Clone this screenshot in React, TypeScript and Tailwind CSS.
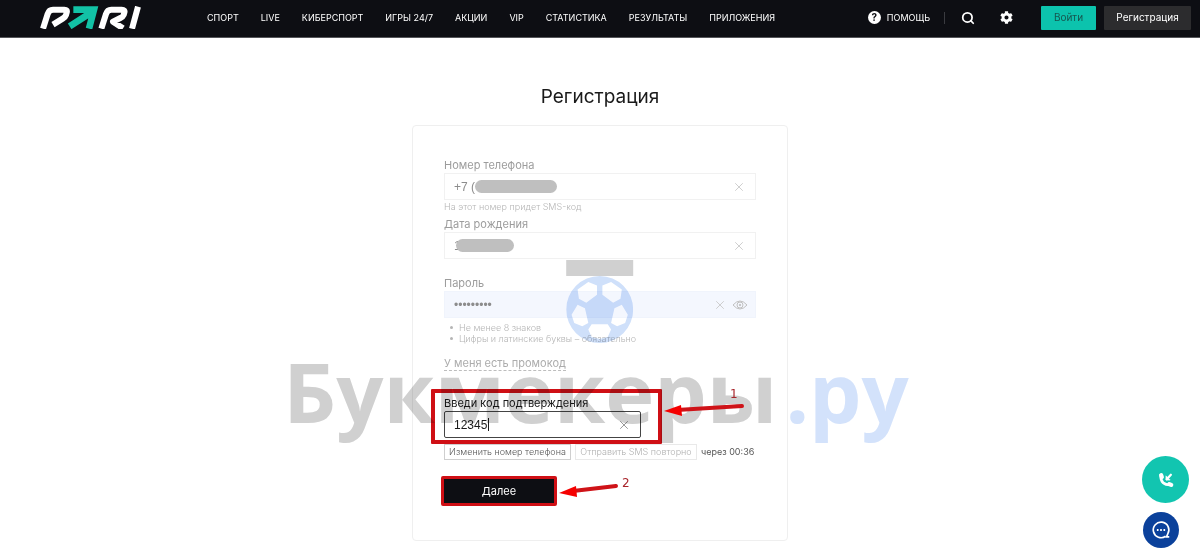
import React, { useState } from 'react';
import { Search, X } from 'lucide-react';
import { FaCog } from 'react-icons/fa';

const NAV = ['Спорт', 'Live', 'Киберспорт', 'Игры 24/7', 'Акции', 'VIP', 'Статистика', 'Результаты', 'Приложения'];

const Logo = () => (
    <svg viewBox="0 0 309 69" className="h-[23px] w-[103px]" aria-label="PARI" role="img">
        <g fill="none" strokeWidth="18" strokeLinejoin="round">
            <path stroke="#fff" d="M12 68 L26 24 Q30 11 42 11 H76 Q86 11 83 20 L81 27 Q79 33 71 38 L42 56" />
            <path stroke="#12c2a6" d="M103 11 H165 L150 68 M92 61 L156 20" strokeLinejoin="miter" strokeWidth="20" />
            <path stroke="#fff" d="M187 68 L201 24 Q205 11 217 11 H248 Q259 11 256 20 L254 27 Q252 32 244 36 L222 47 L252 67 M279 68 L297 2" />
        </g>
    </svg>
);

const Header = () => (
    <header className="flex h-[38px] items-center border-b border-[#55565a] bg-[#0d0e13] pb-[2px] pl-[39px] pr-[9px] text-white">
        <a href="#" className="shrink-0"><Logo /></a>
        <nav className="ml-[65px] flex gap-[22px] whitespace-nowrap text-[9px] uppercase">
            {NAV.map((item) => <a key={item} href="#">{item}</a>)}
        </nav>
        <div className="ml-auto flex items-center">
            <a href="#" className="flex items-center gap-[6px] text-[9px] uppercase">
                <span className="flex size-[13px] items-center justify-center rounded-full bg-white text-[10px] font-bold text-[#0d0e13]">?</span>
                Помощь
            </a>
            <span className="ml-[14px] mr-4 h-3 w-px bg-[#3a3b40]" />
            <button aria-label="Поиск"><Search size={14} strokeWidth={3} /></button>
            <button aria-label="Настройки" className="ml-[25px] mr-7"><FaCog size={13} /></button>
            <button className="h-6 w-[55px] rounded-[1px] bg-[#0cc3ad] text-[10px] text-[#16564f]">Войти</button>
            <button className="ml-2 h-6 w-[87px] rounded-[1px] bg-[#2c2c2e] text-[10px]">Регистрация</button>
        </div>
    </header>
);

interface FieldProps {
    id: string;
    label: string;
    value: string;
    type?: string;
    mask?: string;
    filled?: boolean;
}

const Field: React.FC<FieldProps> = ({ id, label, value, type = 'text', mask, filled }) => {
    const [text, setText] = useState(value);
    return (
        <div>
            <label htmlFor={id} className="block h-4 text-[11px] leading-4 text-[#9c9c9c]">{label}</label>
            <div className={`relative flex h-[27px] items-center border pr-[9px] ${filled ? 'border-[#f0f4fc] bg-[#f4f7fe]' : 'border-[#f1f1f1]'}`}>
                <input
                    id={id}
                    type={type}
                    value={text}
                    onChange={(e) => setText(e.target.value)}
                    className="min-w-0 flex-1 pl-[9px] font-['Liberation_Sans',sans-serif] text-[12px] text-[#8c8c8c] outline-none"
                />
                {mask && <span className={`absolute top-[6px] h-[13px] rounded-full bg-[#bfbfbf] ${mask}`} />}
                <button type="button" aria-label="Очистить" onClick={() => setText('')}>
                    <X size={14} strokeWidth={1.5} className="text-[#c8c8c8]" />
                </button>
                {filled && (
                    <button type="button" aria-label="Показать пароль" className="-mr-[2px] ml-[5px]">
                        <svg viewBox="0 0 32 20" className="h-[10px] w-4 text-[#c0c0c0]" fill="none" stroke="currentColor" strokeWidth="2">
                            <path d="M2 10 Q16 -6 30 10 Q16 26 2 10 Z" />
                            <circle cx="16" cy="10" r="6" />
                            <circle cx="16" cy="10" r="1.500" fill="currentColor" />
                        </svg>
                    </button>
                )}
            </div>
        </div>
    );
};

/* Полупрозрачный знак поверх страницы */
const Watermark = () => (
    <div className="pointer-events-none absolute left-1/2 top-[134px] flex -translate-x-1/2 flex-col items-center mix-blend-multiply" aria-hidden="true">
        <div className="h-4 w-[67px] bg-[#d0d0d0]" />
        <svg viewBox="0 0 100 100" className="size-[67px]">
            <path
                fill="#cfe0fa"
                fillRule="evenodd"
                d="M50 0 A50 50 0 1 1 50 100 A50 50 0 1 1 50 0 Z
                   M17 20 L33 9 L46 14 V28 L30 40 L19 34 Z
                   M83 20 L67 9 L54 14 V28 L70 40 L81 34 Z
                   M8 58 L17 43 L28 48 L33 70 L24 75 L12 70 Z
                   M92 58 L83 43 L72 48 L67 70 L76 75 L88 70 Z
                   M38 72 H62 L67 80 L62 91 L50 94 L38 91 L33 80 Z"
            />
        </svg>
        <p className="whitespace-nowrap pr-2 font-['Open_Sans',sans-serif] text-[83px] font-bold leading-[96px] text-[#d0d0d0]">
            Букмекеры<span className="ml-2 text-[#d3e2fb]">.ру</span>
        </p>
    </div>
);

const Arrows = () => (
    <svg viewBox="0 0 200 120" className="pointer-events-none absolute left-[144px] top-[260px] h-[120px] w-[200px]" fill="none" stroke="#cf1318" strokeWidth="4" strokeLinecap="round">
        <path d="M185 20 L120 24" />
        <path d="M107 25 L124 19 L125 30 Z" fill="#f50000" stroke="none" />
        <path d="M59 100 L16 105" />
        <path d="M2 107 L19 100 L20 111 Z" fill="#f50000" stroke="none" />
    </svg>
);

export default function App() {
    const [code, setCode] = useState('12345');

    return (
        <div className="min-h-screen bg-white font-['Inter',sans-serif] text-[#1a1a1a]">
            <Header />
            <main className="px-4 pb-4 pt-[47px]">
                <h1 className="text-center text-[19px] leading-6">Регистрация</h1>
                <form className="relative mx-auto mt-4 max-w-[376px] rounded-[4px] border border-[#efefef] px-[31px] pb-[34px] pt-[31px]" onSubmit={(e) => e.preventDefault()}>
                    <Field id="phone" label="Номер телефона" value="+7 (" mask="left-[30px] w-[82px]" />
                    <p className="mb-[3px] mt-px text-[9px] font-light leading-3 text-[#b5b5b5]">На этот номер придет SMS-код</p>
                    <Field id="birth" label="Дата рождения" value="1" mask="left-[11px] w-[58px]" />
                    <div className="mt-4">
                        <Field id="password" label="Пароль" value="password1" type="password" filled />
                    </div>
                    <ul className="mt-1 pl-[6px] text-[9px] font-light leading-[11px] text-[#b5b5b5]">
                        {['Не менее 8 знаков', 'Цифры и латинские буквы – обязательно'].map((rule) => (
                            <li key={rule} className="flex items-center gap-[6px]">
                                <span className="size-[3px] rounded-full bg-[#b5b5b5]" />
                                {rule}
                            </li>
                        ))}
                    </ul>
                    <a href="#" className="mt-3 block w-fit border-b border-dashed border-[#bdbdbd] text-[11px] leading-[14px] text-[#acacac]">У меня есть промокод</a>

                    <div className="relative mt-6">
                        <label htmlFor="code" className="block h-4 text-[11px] leading-4">Введи код подтверждения</label>
                        <div className="relative flex h-[27px] w-[197px] items-center rounded-[2px] border border-[#444] pr-[9px]">
                            <input
                                id="code"
                                value={code}
                                onChange={(e) => setCode(e.target.value)}
                                className="min-w-0 flex-1 pl-[9px] font-['Liberation_Sans',sans-serif] text-[12px] caret-transparent outline-none"
                            />
                            <span className="absolute left-[43px] top-[6px] h-[13px] w-px bg-[#1a1a1a]" />
                            <button type="button" aria-label="Очистить" onClick={() => setCode('')}>
                                <X size={14} strokeWidth={1.5} className="text-[#8a8a8a]" />
                            </button>
                        </div>
                        <div className="pointer-events-none absolute -left-[13px] -top-[6px] h-[55px] w-[231px] rounded-[1px] border-4 border-[#cf0f15]" />
                    </div>
                    <div className="mt-[6px] flex items-center gap-1 whitespace-nowrap text-[9px]">
                        <button type="button" className="h-4 w-[127px] border border-[#cfcfcf] font-light text-[#555]">Изменить номер телефона</button>
                        <button type="button" disabled className="h-4 w-[122px] border border-[#e9e9e9] font-light text-[#b0b0b0]">Отправить SMS повторно</button>
                        <span className="text-[#555]">через 00:36</span>
                    </div>
                    <button className="-ml-[3px] mt-4 h-[30px] w-[116px] rounded-[2px] border-[3px] border-[#cf0f15] bg-[#0d0e13] text-[11px] text-white">Далее</button>
                    <Watermark />
                    <Arrows />
                    <span className="absolute left-[317px] top-[260px] font-['DejaVu_Sans',sans-serif] text-[12px] leading-4 text-[#a8242a]">1</span>
                    <span className="absolute left-[209px] top-[349px] font-['DejaVu_Sans',sans-serif] text-[12px] leading-4 text-[#a8242a]">2</span>
                </form>
            </main>
            <div className="fixed bottom-2 right-[11px] flex flex-col items-start gap-[9px]">
                <button aria-label="Позвонить" className="flex size-[47px] items-center justify-center rounded-full bg-[#12c5b0] text-white">
                    <svg viewBox="0 0 24 24" className="size-[18px]" fill="none" stroke="currentColor" strokeLinecap="round">
                        <path d="M5 6 Q4.500 19 18.500 18.500" strokeWidth="3.500" />
                        <path d="M5.500 5.500 L6.500 8 M16.500 17.500 L19 18.500" strokeWidth="5.500" />
                        <path d="M13 11 L18.500 5" strokeWidth="3" />
                        <path d="M12 7 V12 H17 Z" fill="currentColor" strokeWidth="1" strokeLinejoin="round" />
                    </svg>
                </button>
                <button aria-label="Чат" className="ml-px flex size-9 items-center justify-center rounded-full bg-[#0b419b] text-white">
                    <svg viewBox="0 0 24 24" className="size-[22px]" fill="none" stroke="currentColor" strokeWidth="1.800">
                        <path d="M17 18.800 A8.500 8.500 0 1 1 19.500 16 L18 19.500 H21" />
                        <path d="M7.500 12 H9.300 M11.100 12 H12.900 M14.700 12 H16.500" strokeWidth="2" />
                    </svg>
                </button>
            </div>
        </div>
    );
}
